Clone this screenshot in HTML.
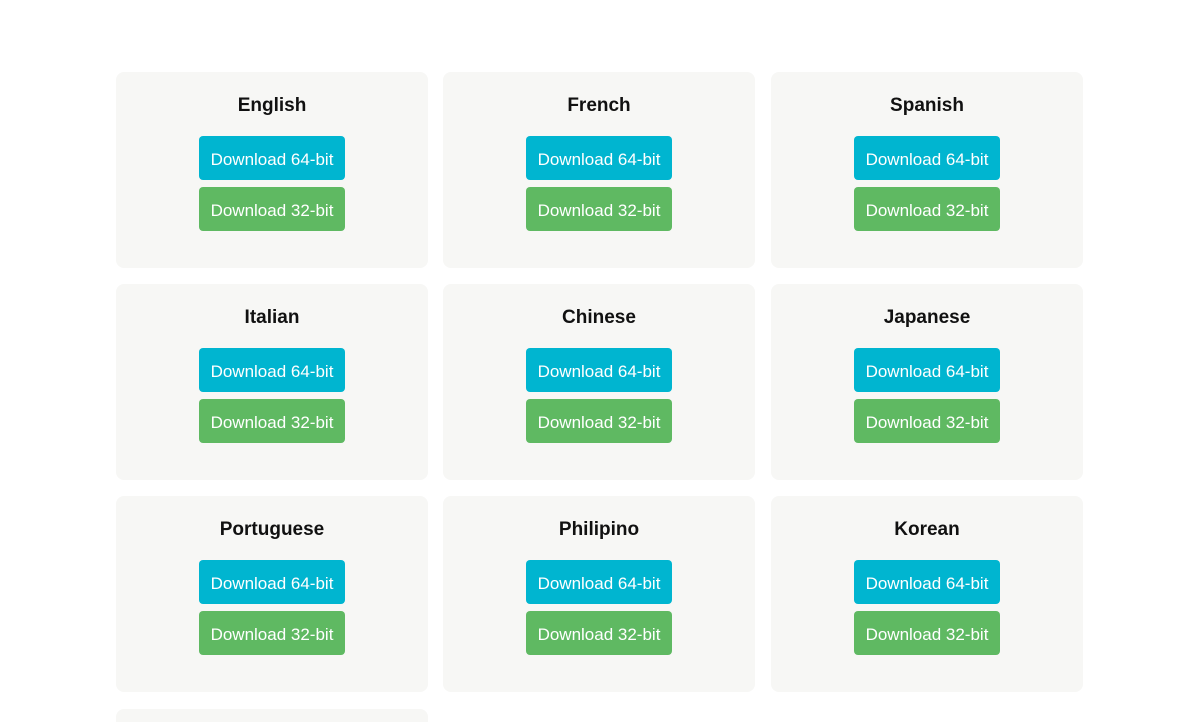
<!DOCTYPE html>
<html style="height:722px;overflow:hidden"><head><style>
body{margin:0;background:#fff;font-family:"Liberation Sans",sans-serif;width:1202px;height:722px;overflow:hidden;position:relative}
.card{position:absolute;width:312px;height:196px;background:#f7f7f5;border-radius:8px;text-align:center}
.card h3{margin:0;position:absolute;top:22px;left:0;right:0;font-size:19px;font-weight:bold;color:#111;line-height:24px}
.b{position:absolute;left:83px;width:146px;height:44px;border-radius:4px;color:#fff;font-size:17px;line-height:48px;text-align:center}
.b1{top:64px;background:#00b5d0}
.b2{top:115px;background:#5fb962}
</style></head><body>
<div class="card" style="left:116px;top:72px"><h3>English</h3><div class="b b1">Download 64-bit</div><div class="b b2">Download 32-bit</div></div>
<div class="card" style="left:443px;top:72px"><h3>French</h3><div class="b b1">Download 64-bit</div><div class="b b2">Download 32-bit</div></div>
<div class="card" style="left:771px;top:72px"><h3>Spanish</h3><div class="b b1">Download 64-bit</div><div class="b b2">Download 32-bit</div></div>
<div class="card" style="left:116px;top:284px"><h3>Italian</h3><div class="b b1">Download 64-bit</div><div class="b b2">Download 32-bit</div></div>
<div class="card" style="left:443px;top:284px"><h3>Chinese</h3><div class="b b1">Download 64-bit</div><div class="b b2">Download 32-bit</div></div>
<div class="card" style="left:771px;top:284px"><h3>Japanese</h3><div class="b b1">Download 64-bit</div><div class="b b2">Download 32-bit</div></div>
<div class="card" style="left:116px;top:496px"><h3>Portuguese</h3><div class="b b1">Download 64-bit</div><div class="b b2">Download 32-bit</div></div>
<div class="card" style="left:443px;top:496px"><h3>Philipino</h3><div class="b b1">Download 64-bit</div><div class="b b2">Download 32-bit</div></div>
<div class="card" style="left:771px;top:496px"><h3>Korean</h3><div class="b b1">Download 64-bit</div><div class="b b2">Download 32-bit</div></div>
<div class="card" style="left:116px;top:709px;height:13px;border-radius:8px 8px 0 0"></div>
</body></html>
